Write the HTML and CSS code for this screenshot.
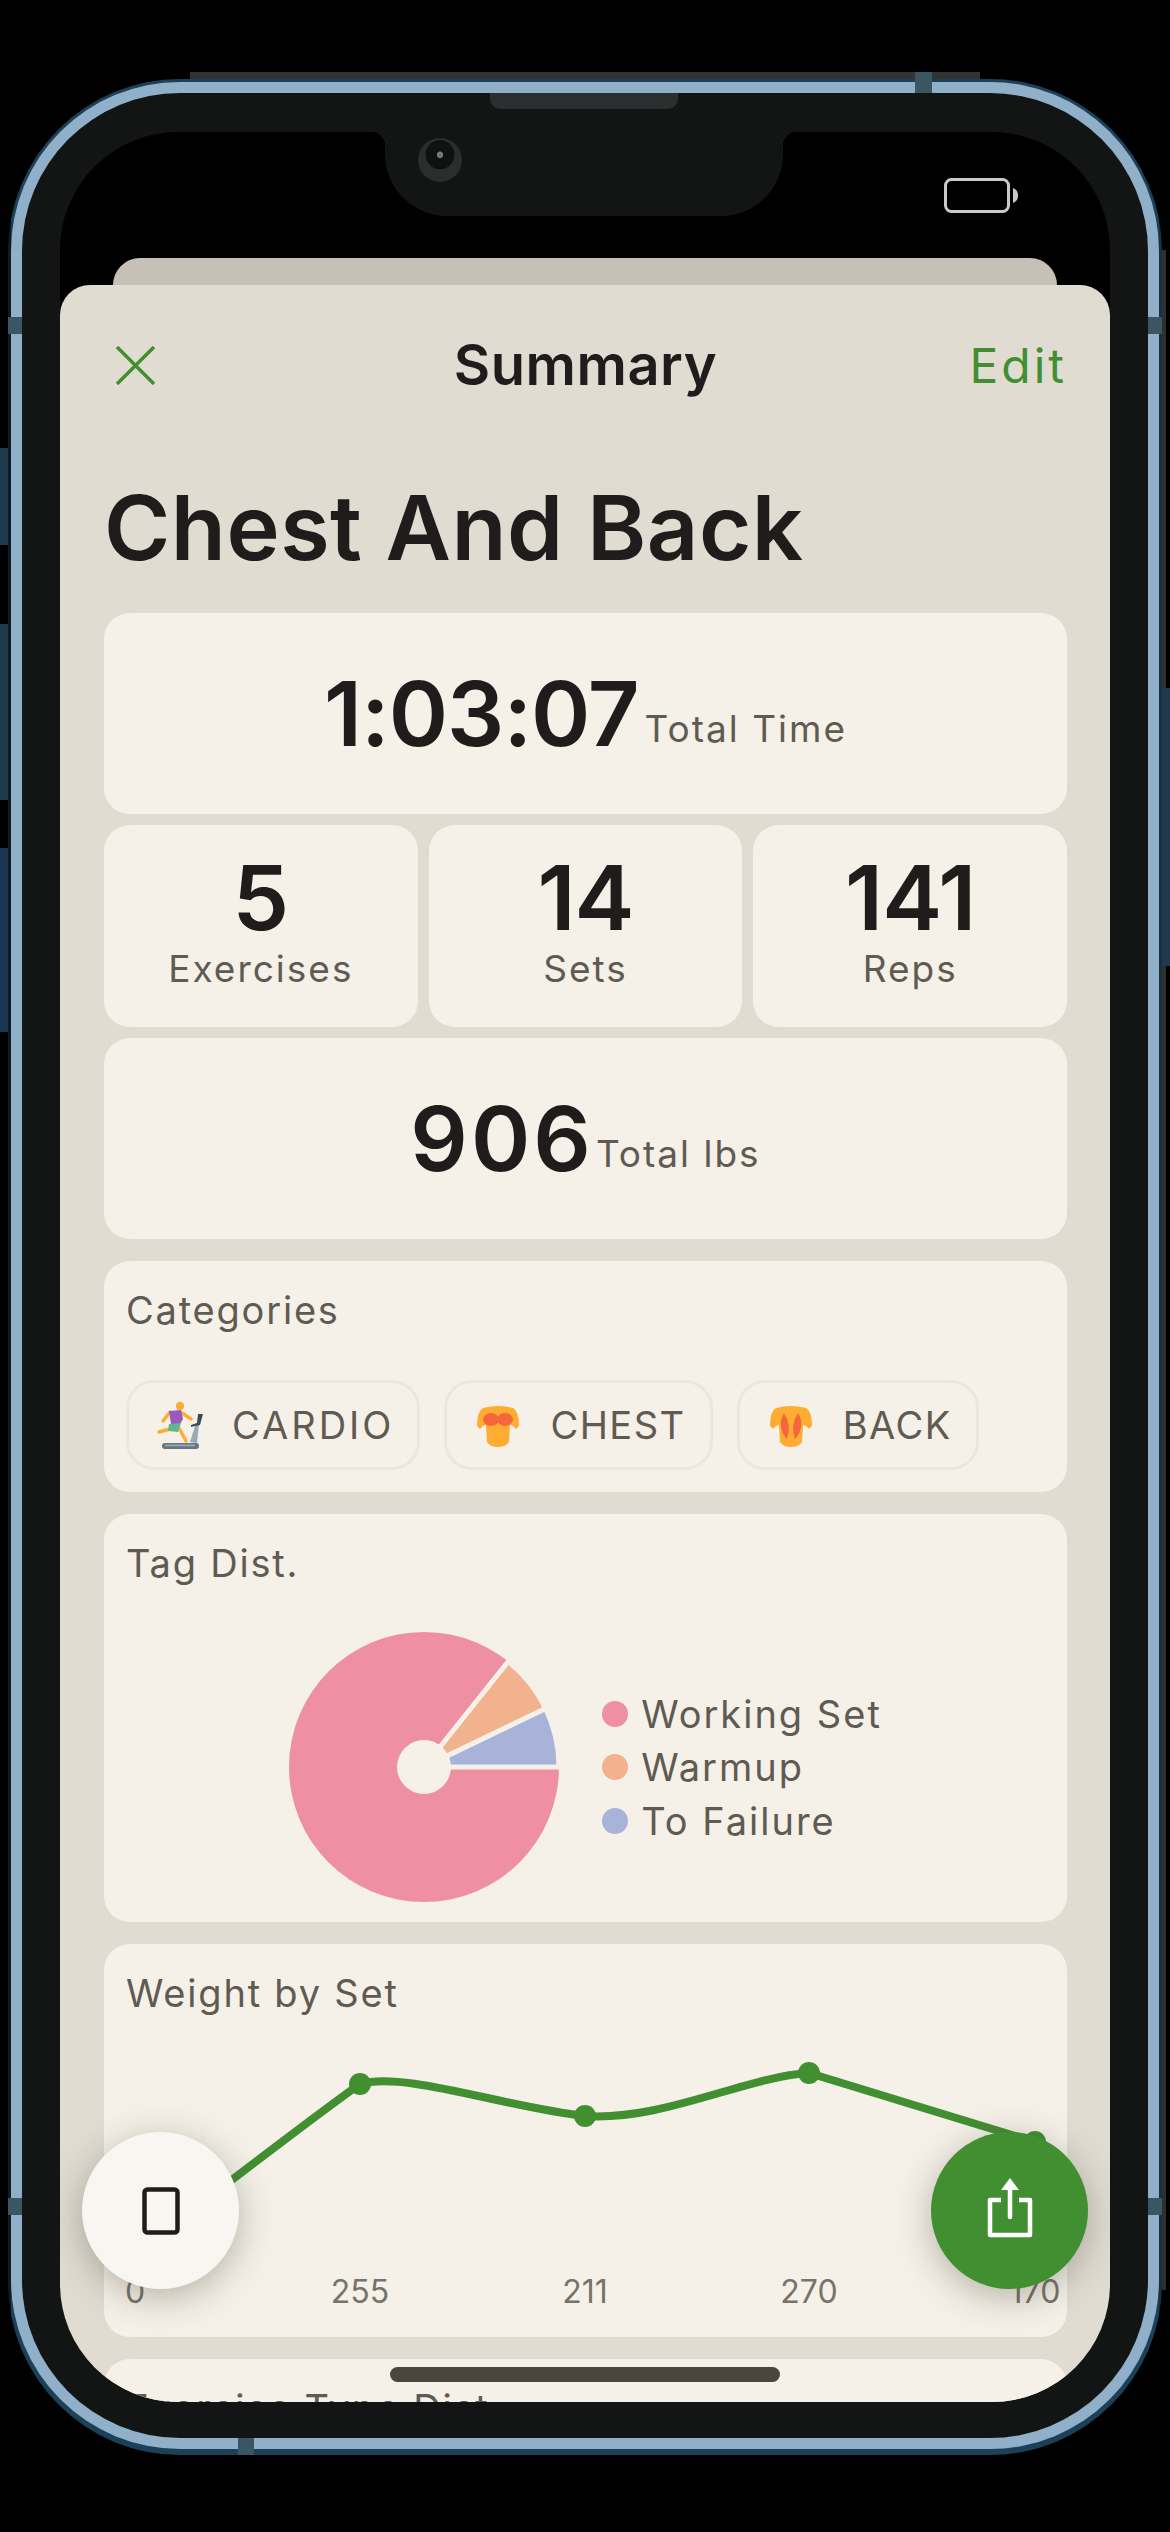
FILE: index.html
```html
<!DOCTYPE html>
<html lang="en">
<head>
    <meta charset="UTF-8">
    <meta name="viewport" content="width=device-width, initial-scale=1.0">
    <title>Summary</title>
    <link rel="stylesheet" href="styles.css">
</head>
<body>
<div class="phone">
    <span class="frame-strip"></span>
    <span class="frame-strip-right"></span>
    <span class="side-btn btn-left-1"></span>
    <span class="side-btn btn-left-2"></span>
    <span class="side-btn btn-left-3"></span>
    <span class="side-btn btn-right"></span>
    <span class="frame-mark mark-top"></span>
    <span class="frame-mark mark-left"></span>
    <span class="frame-mark mark-right"></span>
    <span class="frame-mark mark-left-low"></span>
    <span class="frame-mark mark-right-low"></span>
    <span class="frame-mark mark-bottom"></span>
    <div class="rim">
        <div class="bezel">
            <span class="speaker"></span>
            <div class="screen">
                <div class="notch"><span class="camera"></span></div>
                <svg class="battery" width="76" height="36" viewBox="0 0 76 36">
                    <rect x="1.5" y="1.5" width="63" height="32" rx="6" fill="none" stroke="#c9c9c9" stroke-width="3"/>
                    <path d="M69 10 C73 12 74 14 74 17.5 C74 21 73 23 69 25 Z" fill="#c9c9c9"/>
                </svg>
                <div class="back-card"></div>
                <div class="sheet">
                    <header class="topbar">
                        <svg class="close-icon" width="39" height="39" viewBox="0 0 39 39">
                            <path d="M1 1 L38 38 M38 1 L1 38" stroke="#428f32" stroke-width="3.5" fill="none"/>
                        </svg>
                        <h2>Summary</h2>
                        <span class="edit">Edit</span>
                    </header>
                    <h1>Chest And Back</h1>

                    <div class="stats">
                        <div class="stat-wide">
                            <span class="big-num num-time">1:03:07</span>
                            <span class="side-label">Total Time</span>
                        </div>
                        <div class="stat-row">
                            <div class="stat"><span class="big-num">5</span><span class="stat-label">Exercises</span></div>
                            <div class="stat"><span class="big-num num-tight">14</span><span class="stat-label">Sets</span></div>
                            <div class="stat"><span class="big-num num-tight">141</span><span class="stat-label">Reps</span></div>
                        </div>
                        <div class="stat-wide">
                            <span class="big-num num-wide">906</span>
                            <span class="side-label">Total lbs</span>
                        </div>
                    </div>

                    <section class="panel">
                        <h3>Categories</h3>
                        <div class="chips">
                            <div class="chip chip-wide">
                                <svg width="60" height="60" viewBox="0 0 60 60">
                                    <path d="M20 17 L13 26 M32 18 L41 24 M20 34 L9 37 M29 33 L36 46" stroke="#ffac33" stroke-width="3.4" stroke-linecap="round" fill="none"/>
                                    <circle cx="30" cy="11" r="4.2" fill="#ffac33"/>
                                    <path d="M19 16 L31 15 L33 24 L30 29 L21 29 Z" fill="#9b59c0"/>
                                    <path d="M19 29 L31 28 L28 37 L18 36 Z" fill="#5fb88a"/>
                                    <path d="M40 47 L46 28 L49 29 L47 48 Z" fill="#99aab5"/>
                                    <path d="M48 19 L53 19 L50 30 L41 32 L41 30 L47 28 Z" fill="#3e4c55"/>
                                    <rect x="12" y="48" width="37" height="6" rx="3" fill="#66757f"/>
                                    <rect x="15" y="49.5" width="30" height="1.8" fill="#99aab5"/>
                                </svg>
                                <span>CARDIO</span>
                            </div>
                            <div class="chip">
                                <svg width="60" height="60" viewBox="0 0 60 60">
                                    <path d="M15 13 Q30 9 45 13 Q51 16 51 31 L48 34 Q45 30 42 30 L41 47 Q38 52 30 52 Q22 52 19 47 L18 30 Q15 30 12 34 L9 31 Q9 16 15 13 Z" fill="#ffac33"/>
                                    <ellipse cx="23" cy="24.5" rx="8" ry="6.5" fill="#f4663b"/>
                                    <ellipse cx="37" cy="24.5" rx="8" ry="6.5" fill="#f4663b"/>
                                </svg>
                                <span>CHEST</span>
                            </div>
                            <div class="chip">
                                <svg width="60" height="60" viewBox="0 0 60 60">
                                    <path d="M15 13 Q30 9 45 13 Q51 16 51 31 L48 34 Q45 30 42 30 L41 47 Q38 52 30 52 Q22 52 19 47 L18 30 Q15 30 12 34 L9 31 Q9 16 15 13 Z" fill="#ffac33"/>
                                    <path d="M23 18 Q15 31 26 44 Q31 30 23 18 Z" fill="#f4663b"/>
                                    <path d="M37 18 Q45 31 34 44 Q29 30 37 18 Z" fill="#f4663b"/>
                                </svg>
                                <span>BACK</span>
                            </div>
                        </div>
                    </section>

                    <section class="panel">
                        <h3>Tag Dist.</h3>
                        <div class="tag-dist">
                            <svg width="270" height="270" viewBox="-135 -135 270 270">
                                <circle r="135" fill="#ee90a2"/>
                                <path d="M0 0 L135 0 A135 135 0 0 0 121.6 -58.6 Z" fill="#a9b2d8" stroke="#f5f1e8" stroke-width="5"/>
                                <path d="M0 0 L121.6 -58.6 A135 135 0 0 0 84.2 -105.5 Z" fill="#f2b28e" stroke="#f5f1e8" stroke-width="5"/>
                                <circle r="27" fill="#f5f1e8"/>
                            </svg>
                            <ul class="legend">
                                <li><i class="dot dot-pink"></i>Working Set</li>
                                <li><i class="dot dot-orange"></i>Warmup</li>
                                <li><i class="dot dot-blue"></i>To Failure</li>
                            </ul>
                        </div>
                    </section>

                    <section class="panel">
                        <h3>Weight by Set</h3>
                        <svg class="chart" width="963" height="270" viewBox="0 0 963 270">
                            <path d="M31 215 C100 163 190 92 256 45 C300 32 400 68 481 77 C560 82 640 38 705 34 L931 103" fill="none" stroke="#428f32" stroke-width="8"/>
                            <circle cx="256" cy="45" r="11" fill="#428f32"/>
                            <circle cx="481" cy="77" r="11" fill="#428f32"/>
                            <circle cx="705" cy="34" r="11" fill="#428f32"/>
                            <circle cx="931" cy="103" r="11" fill="#428f32"/>
                            <g class="axis">
                                <text x="31" y="264">0</text>
                                <text x="256" y="264">255</text>
                                <text x="481" y="264">211</text>
                                <text x="705" y="264">270</text>
                                <text x="931" y="264">170</text>
                            </g>
                        </svg>
                    </section>

                    <section class="panel">
                        <h3>Exercise Type Dist.</h3>
                    </section>
                </div>

                <div class="fab fab-light">
                    <svg width="40" height="50" viewBox="0 0 40 50">
                        <rect x="3.5" y="3.5" width="33" height="43" rx="3" fill="none" stroke="#1f1c1b" stroke-width="4.5"/>
                    </svg>
                </div>
                <div class="fab fab-green">
                    <svg width="50" height="66" viewBox="0 0 50 66">
                        <path d="M16 22 H5 V57 H45 V22 H34" fill="none" stroke="#fff" stroke-width="4.5" stroke-linejoin="round"/>
                        <path d="M25 8 V39" stroke="#fff" stroke-width="4.5" stroke-linecap="round"/>
                        <path d="M25 0 L34 12 H16 Z" fill="#fff"/>
                    </svg>
                </div>
                <span class="home-bar"></span>
            </div>
        </div>
    </div>
</div>
</body>
</html>
```

FILE: styles.css
```css
* {
    box-sizing: border-box;
}
body {
    margin: 0;
    background-color: #000;
    font-family: Inter, "Liberation Sans", sans-serif;
    color: #1f1c1b;
    overflow: hidden;
}
h1, h2, h3, ul {
    margin: 0;
    padding: 0;
}

/* device frame */
.phone {
    position: relative;
    width: 1154px;
    height: 2376px;
    margin: 79px 0 0 8px;
    padding: 3px 3px 6px;
    background: linear-gradient(to right, #0e1b24 3px, #1c4058 3px, #1c4058 calc(100% - 3px), #1a3040 calc(100% - 3px));
    border-radius: 172px;
}
.rim {
    height: 100%;
    padding: 11px;
    background-color: #8fb0c8;
    border-radius: 169px;
}
.bezel {
    position: relative;
    height: 100%;
    padding: 39px 38px 36px;
    background-color: #131515;
    border-radius: 158px;
}
.frame-strip {
    position: absolute;
    left: 182px;
    top: -7px;
    width: 790px;
    height: 7px;
    background-color: #333;
}
.frame-strip-right {
    position: absolute;
    right: -4px;
    top: 171px;
    width: 4px;
    height: 2040px;
    background-color: #2f2f2c;
}
.side-btn {
    position: absolute;
    width: 8px;
}
.btn-left-1 {
    left: -8px;
    top: 369px;
    height: 97px;
    background-color: #1f3a4c;
}
.btn-left-2 {
    left: -8px;
    top: 545px;
    height: 176px;
    background-color: #20394a;
}
.btn-left-3 {
    left: -8px;
    top: 769px;
    height: 184px;
    background-color: #1a3550;
}
.btn-right {
    right: -8px;
    top: 609px;
    height: 278px;
    background-color: #1e3a50;
}
.frame-mark {
    position: absolute;
    z-index: 2;
    background-color: #3c5562;
}
.mark-top {
    left: 907px;
    top: -7px;
    width: 17px;
    height: 21px;
}
.mark-left, .mark-left-low {
    left: 0;
    width: 14px;
    height: 17px;
}
.mark-right, .mark-right-low {
    right: 0;
    width: 14px;
    height: 17px;
}
.mark-left, .mark-right {
    top: 238px;
}
.mark-left-low, .mark-right-low {
    top: 2119px;
}
.mark-bottom {
    left: 230px;
    bottom: 0;
    width: 16px;
    height: 17px;
}
.speaker {
    position: absolute;
    left: 468px;
    top: 0;
    width: 188px;
    height: 16px;
    background-color: #2a2e2e;
    border-radius: 0 0 10px 10px;
}
.screen {
    position: relative;
    height: 100%;
    overflow: hidden;
    background-color: #000;
    border-radius: 118px;
}
.notch {
    position: absolute;
    left: 325px;
    top: 0;
    width: 398px;
    height: 84px;
    background-color: #131515;
    border-radius: 0 0 62px 62px;
}
.notch::before, .notch::after {
    content: "";
    position: absolute;
    top: 0;
    width: 14px;
    height: 14px;
}
.notch::before {
    left: -14px;
    background: radial-gradient(circle at 0 100%, transparent 14px, #131515 14.5px);
}
.notch::after {
    right: -14px;
    background: radial-gradient(circle at 100% 100%, transparent 14px, #131515 14.5px);
}
.camera {
    position: absolute;
    left: 33px;
    top: 6px;
    width: 44px;
    height: 44px;
    background: radial-gradient(circle at 50% 38%, #777 0 3px, #101212 3.5px 14px, #2b2e2e 15px);
    border-radius: 50%;
}
.battery {
    position: absolute;
    left: 884px;
    top: 46px;
}
.back-card {
    height: 27px;
    margin: 126px 53px 0;
    background-color: #c6c0b6;
    border-radius: 30px 30px 0 0;
}
.sheet {
    height: 2117px;
    padding: 0 43px 0 44px;
    background-color: #e0dcd2;
    border-radius: 30px 30px 0 0;
    overflow: hidden;
}

/* header */
.topbar {
    display: grid;
    grid-template-columns: 1fr auto 1fr;
    align-items: center;
    height: 160px;
}
.close-icon {
    margin-left: 12px;
}
.topbar h2 {
    font-size: 56px;
    font-weight: 600;
    letter-spacing: 0.5px;
}
.edit {
    justify-self: end;
    color: #428f32;
    font-size: 48px;
    letter-spacing: 3px;
}
h1 {
    font-size: 90px;
    font-weight: 600;
    line-height: 166px;
    margin-bottom: 2px;
    letter-spacing: 0.5px;
    white-space: nowrap;
}

/* stat cards */
.stats {
    display: flex;
    flex-direction: column;
    gap: 11px;
}
.stat-row {
    display: flex;
    gap: 11px;
}
.stat-wide, .stat, .panel {
    background-color: #f5f1e8;
    border-radius: 26px;
}
.stat-wide {
    display: flex;
    justify-content: center;
    align-items: center;
    height: 201px;
}
.stat {
    flex: 1;
    display: flex;
    flex-direction: column;
    align-items: center;
    height: 202px;
    padding-top: 23px;
}
.big-num {
    font-size: 90px;
    font-weight: 600;
    line-height: 100px;
}
.num-time {
    margin-right: 6px;
    letter-spacing: -1px;
}
.num-tight {
    letter-spacing: -1px;
}
.num-wide {
    margin-right: 2px;
    letter-spacing: 3px;
}
.side-label {
    margin-top: 30px;
    font-size: 37px;
    letter-spacing: 2px;
    color: #5f5b52;
}
.stat-label {
    font-size: 37px;
    line-height: 42px;
    letter-spacing: 2px;
    color: #5f5b52;
}

/* panels */
.panel {
    margin-top: 22px;
    padding: 22px 22px 20px;
}
.panel h3 {
    font-size: 38px;
    font-weight: 400;
    line-height: 54px;
    letter-spacing: 1.8px;
    color: #5f5b52;
    white-space: nowrap;
}
.chips {
    display: flex;
    gap: 24px;
    margin-top: 43px;
    padding-bottom: 2px;
}
.chip {
    display: flex;
    align-items: center;
    gap: 22px;
    height: 90px;
    padding: 0 24px 0 21px;
    border: 3px solid #ebe7dc;
    border-radius: 28px;
    font-size: 38px;
    letter-spacing: 1.5px;
    color: #5f5b52;
}
.chip-wide {
    padding-right: 23px;
    letter-spacing: 3px;
}
.tag-dist {
    display: flex;
    justify-content: center;
    align-items: center;
    gap: 43px;
    margin-top: 42px;
}
.legend {
    list-style: none;
}
.legend li {
    display: flex;
    align-items: center;
    gap: 13px;
    height: 53.5px;
    font-size: 38px;
    letter-spacing: 2px;
    color: #5f5b52;
}
.dot {
    width: 26px;
    height: 26px;
    border-radius: 50%;
}
.dot-pink {
    background-color: #ee90a2;
}
.dot-orange {
    background-color: #f2b28e;
}
.dot-blue {
    background-color: #a9b2d8;
}
.chart {
    display: block;
    margin: 19px -22px 8px;
}
.axis text {
    font-size: 32px;
    fill: #77736a;
    text-anchor: middle;
}

/* floating stuff */
.fab {
    position: absolute;
    top: 2000px;
    display: flex;
    justify-content: center;
    align-items: center;
    width: 157px;
    height: 157px;
    border-radius: 50%;
    box-shadow: 0 8px 36px rgba(60, 55, 40, 0.34);
}
.fab-light {
    left: 22px;
    background-color: #f8f6f0;
}
.fab-green {
    right: 22px;
    background-color: #428f32;
}
.home-bar {
    position: absolute;
    left: 330px;
    top: 2235px;
    width: 390px;
    height: 15px;
    background-color: #4a463f;
    border-radius: 8px;
}
```
